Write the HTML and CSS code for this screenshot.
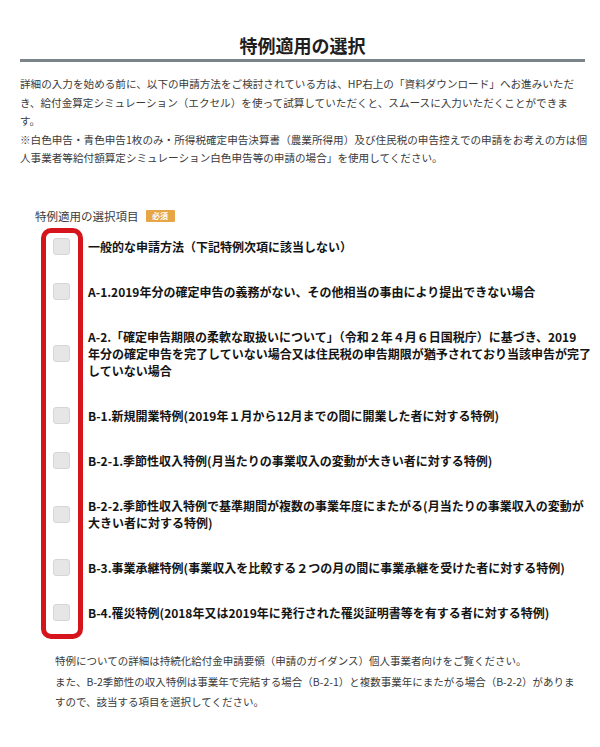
FILE: index.html
```html
<!DOCTYPE html>
<html lang="ja">
<head>
<meta charset="utf-8">
<title>特例適用の選択</title>
<link rel="stylesheet" href="styles.css">
</head>
<body>
<div class="page">
  <h1 class="title">特例適用の選択</h1>
  <p class="intro">詳細の入力を始める前に、以下の申請方法をご検討されている方は、HP右上の「資料ダウンロード」へお進みいただ<br>き、給付金算定シミュレーション（エクセル）を使って試算していただくと、スムースに入力いただくことができま<br>す。<br>※白色申告・青色申告1枚のみ・所得税確定申告決算書（農業所得用）及び住民税の申告控えでの申請をお考えの方は個<br>人事業者等給付額算定シミュレーション白色申告等の申請の場合」を使用してください。</p>

  <div class="field-label">
    <span>特例適用の選択項目</span>
    <span class="badge">必須</span>
  </div>

  <div class="options">
    <label class="option"><span class="box"></span><span class="text">一般的な申請方法（下記特例次項に該当しない）</span></label>
    <label class="option"><span class="box"></span><span class="text">A-1.2019年分の確定申告の義務がない、その他相当の事由により提出できない場合</span></label>
    <label class="option"><span class="box"></span><span class="text">A-2.「確定申告期限の柔軟な取扱いについて」（令和２年４月６日国税庁）に基づき、2019<br>年分の確定申告を完了していない場合又は住民税の申告期限が猶予されており当該申告が完了<br>していない場合</span></label>
    <label class="option"><span class="box"></span><span class="text">B-1.新規開業特例(2019年１月から12月までの間に開業した者に対する特例)</span></label>
    <label class="option"><span class="box"></span><span class="text">B-2-1.季節性収入特例(月当たりの事業収入の変動が大きい者に対する特例)</span></label>
    <label class="option"><span class="box"></span><span class="text">B-2-2.季節性収入特例で基準期間が複数の事業年度にまたがる(月当たりの事業収入の変動が<br>大きい者に対する特例)</span></label>
    <label class="option"><span class="box"></span><span class="text">B-3.事業承継特例(事業収入を比較する２つの月の間に事業承継を受けた者に対する特例)</span></label>
    <label class="option"><span class="box"></span><span class="text">B-4.罹災特例(2018年又は2019年に発行された罹災証明書等を有する者に対する特例)</span></label>
    <div class="highlight"></div>
  </div>

  <p class="note">特例についての詳細は持続化給付金申請要領（申請のガイダンス）個人事業者向けをご覧ください。<br>また、B-2季節性の収入特例は事業年で完結する場合（B-2-1）と複数事業年にまたがる場合（B-2-2）がありま<br>すので、該当する項目を選択してください。</p>
</div>
</body>
</html>
```

FILE: styles.css
```css
html, body {
  margin: 0;
  padding: 0;
  background: #ffffff;
}

body {
  font-family: "Noto Sans CJK JP", "Noto Sans", sans-serif;
  color: #333333;
}

.page {
  width: 600px;
  height: 747px;
  overflow: hidden;
  display: flex;
  flex-direction: column;
}

.title {
  margin: 33px 15px 0 20px;
  padding-bottom: 2px;
  font-size: 18px;
  line-height: 24px;
  font-weight: bold;
  color: #1e1e1e;
  text-align: center;
  border-bottom: 3px solid #7b8589;
}

.intro {
  margin: 13px 0 0 20px;
  font-size: 10.6px;
  line-height: 18.5px;
  color: #3a3a3a;
  white-space: nowrap;
}

.field-label {
  margin: 40px 0 0 35px;
  display: flex;
  align-items: center;
  gap: 7px;
  font-size: 11.5px;
  line-height: 16px;
  color: #3a3a3a;
}

.badge {
  display: inline-flex;
  align-items: center;
  justify-content: center;
  width: 29px;
  height: 12px;
  background: #e7a646;
  color: #ffffff;
  font-size: 8px;
  font-weight: bold;
  line-height: 12px;
  border-radius: 1px;
}

.options {
  position: relative;
  margin: 14.5px 0 0 53px;
  display: flex;
  flex-direction: column;
  gap: 28px;
}

.option {
  display: flex;
  align-items: center;
  gap: 18px;
}

.box {
  flex: none;
  width: 15px;
  height: 15px;
  background: #e6e6e6;
  border: 1px solid #d6d6d6;
  border-radius: 3px;
}

.text {
  font-size: 12px;
  line-height: 17px;
  font-weight: bold;
  color: #141414;
  white-space: nowrap;
}

.highlight {
  position: absolute;
  left: -12px;
  top: -10.5px;
  width: 32px;
  bottom: -17.5px;
  border: 5px solid #d5141c;
  border-radius: 10px;
  pointer-events: none;
}

.note {
  margin: 30px 0 0 55px;
  font-size: 10.5px;
  line-height: 20.5px;
  color: #3a3a3a;
  white-space: nowrap;
}
```
